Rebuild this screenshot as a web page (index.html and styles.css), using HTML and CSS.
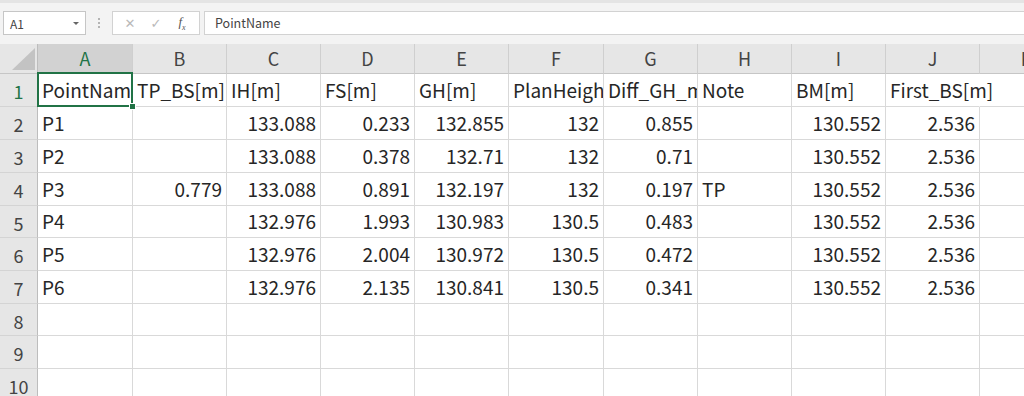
FILE: index.html
```html
<!DOCTYPE html>
<html>
<head>
    <meta charset="UTF-8">
    <title>Book1 - Excel</title>
    <link rel="stylesheet" href="styles.css">
</head>
<body>
    <div class="toolbar">
        <div class="namebox">
            <span>A1</span>
            <i class="drop"></i>
        </div>
        <div class="grip"><b></b><b></b><b></b></div>
        <div class="fbtns">
            <span class="fbtn">&#x2715;</span>
            <span class="fbtn">&#x2713;</span>
            <span class="fbtn fx">f<sub>x</sub></span>
        </div>
        <div class="formula">PointName</div>
    </div>

    <div class="sheet">
        <div class="corner"><i></i></div>
        <div class="ch sel">A</div>
        <div class="ch">B</div>
        <div class="ch">C</div>
        <div class="ch">D</div>
        <div class="ch">E</div>
        <div class="ch">F</div>
        <div class="ch">G</div>
        <div class="ch">H</div>
        <div class="ch">I</div>
        <div class="ch">J</div>
        <div class="ch">K</div>

        <div class="rh sel">1</div>
        <div class="c">PointName</div>
        <div class="c">TP_BS[m]</div>
        <div class="c">IH[m]</div>
        <div class="c">FS[m]</div>
        <div class="c">GH[m]</div>
        <div class="c">PlanHeight[m]</div>
        <div class="c">Diff_GH_m</div>
        <div class="c">Note</div>
        <div class="c">BM[m]</div>
        <div class="c spill">First_BS[m]</div>
        <div class="c"></div>

        <div class="rh">2</div>
        <div class="c">P1</div>
        <div class="c"></div>
        <div class="c n">133.088</div>
        <div class="c n">0.233</div>
        <div class="c n">132.855</div>
        <div class="c n">132</div>
        <div class="c n">0.855</div>
        <div class="c"></div>
        <div class="c n">130.552</div>
        <div class="c n">2.536</div>
        <div class="c"></div>

        <div class="rh">3</div>
        <div class="c">P2</div>
        <div class="c"></div>
        <div class="c n">133.088</div>
        <div class="c n">0.378</div>
        <div class="c n">132.71</div>
        <div class="c n">132</div>
        <div class="c n">0.71</div>
        <div class="c"></div>
        <div class="c n">130.552</div>
        <div class="c n">2.536</div>
        <div class="c"></div>

        <div class="rh">4</div>
        <div class="c">P3</div>
        <div class="c n">0.779</div>
        <div class="c n">133.088</div>
        <div class="c n">0.891</div>
        <div class="c n">132.197</div>
        <div class="c n">132</div>
        <div class="c n">0.197</div>
        <div class="c">TP</div>
        <div class="c n">130.552</div>
        <div class="c n">2.536</div>
        <div class="c"></div>

        <div class="rh">5</div>
        <div class="c">P4</div>
        <div class="c"></div>
        <div class="c n">132.976</div>
        <div class="c n">1.993</div>
        <div class="c n">130.983</div>
        <div class="c n">130.5</div>
        <div class="c n">0.483</div>
        <div class="c"></div>
        <div class="c n">130.552</div>
        <div class="c n">2.536</div>
        <div class="c"></div>

        <div class="rh">6</div>
        <div class="c">P5</div>
        <div class="c"></div>
        <div class="c n">132.976</div>
        <div class="c n">2.004</div>
        <div class="c n">130.972</div>
        <div class="c n">130.5</div>
        <div class="c n">0.472</div>
        <div class="c"></div>
        <div class="c n">130.552</div>
        <div class="c n">2.536</div>
        <div class="c"></div>

        <div class="rh">7</div>
        <div class="c">P6</div>
        <div class="c"></div>
        <div class="c n">132.976</div>
        <div class="c n">2.135</div>
        <div class="c n">130.841</div>
        <div class="c n">130.5</div>
        <div class="c n">0.341</div>
        <div class="c"></div>
        <div class="c n">130.552</div>
        <div class="c n">2.536</div>
        <div class="c"></div>

        <div class="rh">8</div>
        <div class="c"></div><div class="c"></div><div class="c"></div><div class="c"></div><div class="c"></div>
        <div class="c"></div><div class="c"></div><div class="c"></div><div class="c"></div><div class="c"></div><div class="c"></div>

        <div class="rh">9</div>
        <div class="c"></div><div class="c"></div><div class="c"></div><div class="c"></div><div class="c"></div>
        <div class="c"></div><div class="c"></div><div class="c"></div><div class="c"></div><div class="c"></div><div class="c"></div>

        <div class="rh">10</div>
        <div class="c"></div><div class="c"></div><div class="c"></div><div class="c"></div><div class="c"></div>
        <div class="c"></div><div class="c"></div><div class="c"></div><div class="c"></div><div class="c"></div><div class="c"></div>

        <div class="cursor"><i></i></div>
    </div>
</body>
</html>
```

FILE: styles.css
```css
*{
    margin: 0;
    padding: 0;
    box-sizing: border-box;
}
html,body{
    width: 100%;
    height: 100%;
    overflow: hidden;
    background: #fff;
    font-family: "Noto Sans CJK JP", "Noto Sans", sans-serif;
}

/* formula bar */
.toolbar{
    height: 44px;
    display: flex;
    align-items: flex-start;
    padding: 8px 0 0 3px;
    background: #f3f3f3;
    border-top: 3px solid #e4e4e4;
}
.namebox{
    width: 83px;
    height: 24px;
    display: flex;
    align-items: center;
    justify-content: space-between;
    padding: 0 6px 0 6px;
    background: #fff;
    border: 1px solid #c6c6c6;
    font-size: 12px;
    color: #444;
}
.drop{
    width: 0;
    height: 0;
    border-left: 3px solid transparent;
    border-right: 3px solid transparent;
    border-top: 3px solid #666;
    margin-top: 1px;
}
.grip{
    width: 26px;
    height: 24px;
    display: flex;
    flex-direction: column;
    align-items: center;
    justify-content: center;
    gap: 2px;
}
.grip b{
    display: block;
    width: 2px;
    height: 2px;
    background: #b4b4b4;
}
.fbtns{
    width: 88px;
    height: 24px;
    display: flex;
    align-items: center;
    justify-content: space-around;
    padding: 0 4px;
    background: #fff;
    border: 1px solid #d2d2d2;
}
.fbtn{
    width: 20px;
    text-align: center;
    font-size: 13px;
    color: #b9b9b9;
    font-family: "DejaVu Sans", sans-serif;
}
.fbtn.fx{
    color: #555;
    font-family: "Liberation Serif", serif;
    font-style: italic;
    font-size: 13px;
}
.fbtn.fx sub{
    font-size: 8px;
}
.formula{
    flex: 1;
    height: 24px;
    margin-left: 4px;
    padding: 0 10px;
    line-height: 22px;
    background: #fff;
    border: 1px solid #d2d2d2;
    border-right: 0;
    font-size: 12.5px;
    color: #444;
}

/* grid */
.sheet{
    position: relative;
    display: grid;
    grid-template-columns: 38px 95px 94px 94px 94px 94px 95px 94px 94px 94px 94px 94px;
    grid-template-rows: 30px 33px 33px 33px 33px 32px 33px 33px 32px 33px 33px;
    font-size: 19px;
    color: #262626;
}
.corner{
    position: relative;
    background: #e6e6e6;
    border-right: 1px solid #bdbdbd;
    border-bottom: 1px solid #c6c6c6;
}
.corner i{
    position: absolute;
    right: 2px;
    bottom: 3px;
    width: 0;
    height: 0;
    border-left: 23px solid transparent;
    border-bottom: 22px solid #c3c3c3;
}
.ch{
    display: flex;
    align-items: center;
    justify-content: center;
    background: #e6e6e6;
    border-right: 1px solid #cfcfcf;
    border-bottom: 1px solid #c6c6c6;
    font-size: 18px;
    color: #444;
    padding-bottom: 1px;
}
.ch.sel{
    background: #d2d2d2;
    color: #217346;
}
.rh{
    display: flex;
    align-items: center;
    justify-content: center;
    background: #e6e6e6;
    border-right: 1px solid #bdbdbd;
    border-bottom: 1px solid #d4d4d4;
    font-size: 18px;
    color: #444;
    padding-top: 2px;
}
.rh.sel{
    color: #217346;
}
.c{
    display: flex;
    align-items: flex-end;
    padding: 0 4px 3px 4px;
    border-right: 1px solid #d9d9d9;
    border-bottom: 1px solid #d9d9d9;
    white-space: nowrap;
    overflow: hidden;
}
.c.n{
    justify-content: flex-end;
    padding-right: 4px;
}
.c.spill{
    overflow: visible;
    border-right-color: transparent;
}

/* active cell */
.cursor{
    position: absolute;
    left: 37px;
    top: 28px;
    width: 96px;
    height: 35px;
    border: 2px solid #217346;
    pointer-events: none;
}
.cursor i{
    position: absolute;
    right: -5px;
    bottom: -5px;
    width: 7px;
    height: 7px;
    background: #217346;
    border: 1px solid #fff;
}
```
